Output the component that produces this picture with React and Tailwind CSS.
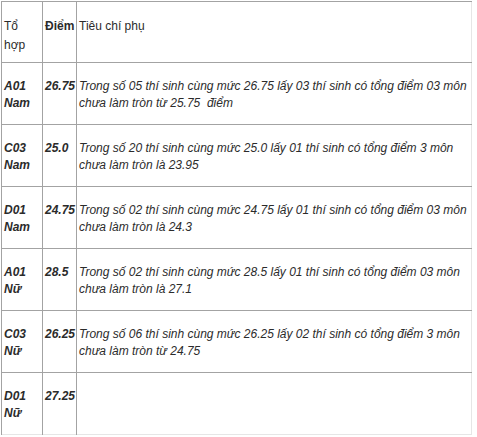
import React from "react";

const rows = [
  ["A01", "Nam", "26.75", "Trong số 05 thí sinh cùng mức 26.75 lấy 03 thí sinh có tổng điểm 03 môn", "chưa làm tròn từ 25.75\u00a0 điểm"],
  ["C03", "Nam", "25.0", "Trong số 20 thí sinh cùng mức 25.0 lấy 01 thí sinh có tổng điểm 3 môn", "chưa làm tròn là 23.95"],
  ["D01", "Nam", "24.75", "Trong số 02 thí sinh cùng mức 24.75 lấy 01 thí sinh có tổng điểm 03 môn", "chưa làm tròn là 24.3"],
  ["A01", "Nữ", "28.5", "Trong số 02 thí sinh cùng mức 28.5 lấy 01 thí sinh có tổng điểm 03 môn", "chưa làm tròn là 27.1"],
  ["C03", "Nữ", "26.25", "Trong số 06 thí sinh cùng mức 26.25 lấy 02 thí sinh có tổng điểm 3 môn", "chưa làm tròn từ 24.75"],
  ["D01", "Nữ", "27.25", null, null],
];

export default function App() {
  const cell = "border-l border-t border-[#a3a3a3] align-top px-[2px] whitespace-nowrap";
  const body = cell + " pt-[15px] leading-[17px]";
  const head = cell + " pt-[15px] leading-[19px]";
  return (
    <div className="w-[477px] h-[437px] bg-white pl-px pt-px" style={{ fontFamily: '"Liberation Sans", Arial, sans-serif' }}>
      <table className="table-fixed border-collapse text-[12px] text-[#2b2b2b] w-[471px] border-r border-b border-r-[#e6e6e6] border-b-[#e6e6e6]">
        <colgroup>
          <col className="w-[41px]" />
          <col className="w-[34px]" />
          <col />
        </colgroup>
        <tbody>
          <tr className="h-[61px]">
            <td className={head}>Tổ<br />hợp</td>
            <td className={head + " font-bold"}>Điểm</td>
            <td className={head}>Tiêu chí phụ</td>
          </tr>
          {rows.map((r, i) => (
            <tr key={i} className="h-[62px]">
              <td className={body + " font-bold italic"}>{r[0]}<br />{r[1]}</td>
              <td className={body + " font-bold italic"}>{r[2]}</td>
              <td className={body + " italic"}>
                {r[3] && (
                  <>
                    {r[3]}
                    <br />
                    {r[4]}
                  </>
                )}
              </td>
            </tr>
          ))}
        </tbody>
      </table>
    </div>
  );
}
